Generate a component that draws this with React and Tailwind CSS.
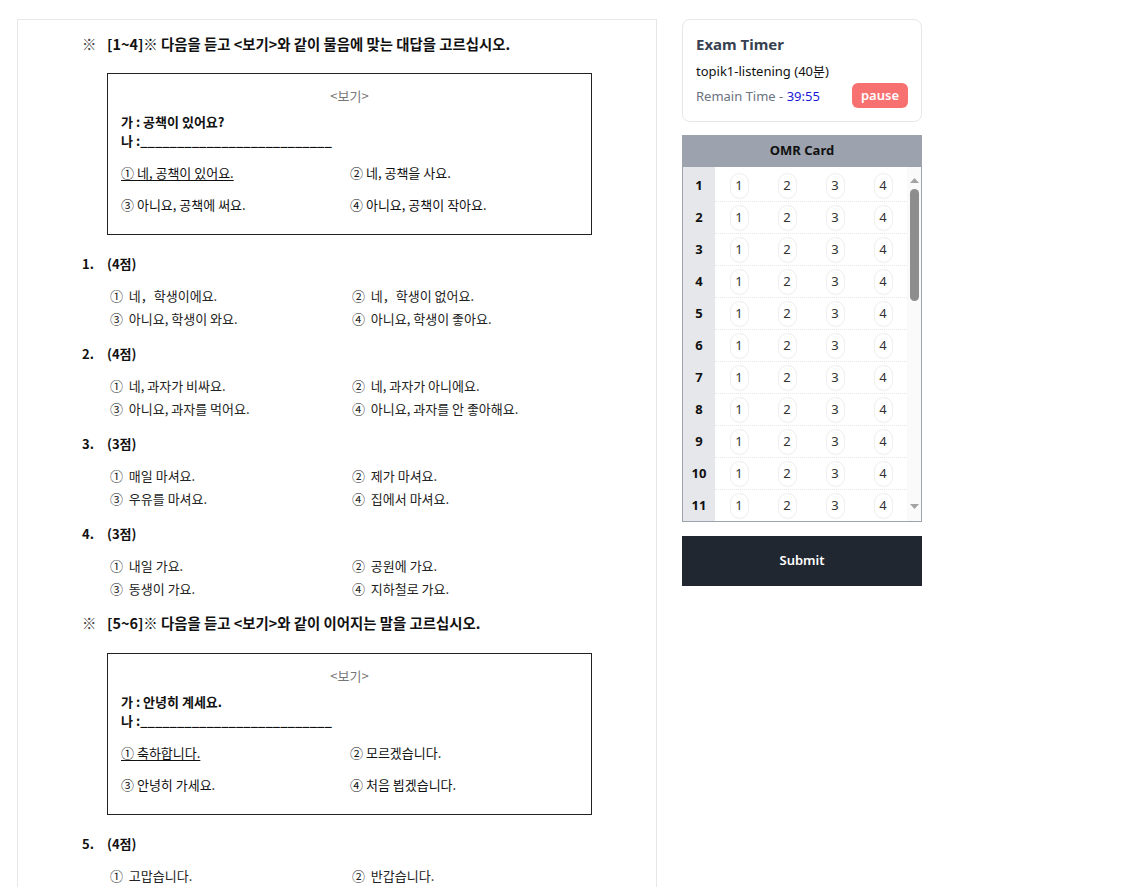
import React from 'react';

const SECTIONS = [
  {
    range: '[1~4]',
    title: '다음을 듣고 <보기>와 같이 물음에 맞는 대답을 고르십시오.',
    example: {
      ga: '공책이 있어요?',
      options: ['네, 공책이 있어요.', '네, 공책을 사요.', '아니요, 공책에 써요.', '아니요, 공책이 작아요.'],
    },
    questions: [
      { no: 1, score: 4, options: ['네，학생이에요.', '네，학생이 없어요.', '아니요, 학생이 와요.', '아니요, 학생이 좋아요.'] },
      { no: 2, score: 4, options: ['네, 과자가 비싸요.', '네, 과자가 아니에요.', '아니요, 과자를 먹어요.', '아니요, 과자를 안 좋아해요.'] },
      { no: 3, score: 3, options: ['매일 마셔요.', '제가 마셔요.', '우유를 마셔요.', '집에서 마셔요.'] },
      { no: 4, score: 3, options: ['내일 가요.', '공원에 가요.', '동생이 가요.', '지하철로 가요.'] },
    ],
  },
  {
    range: '[5~6]',
    title: '다음을 듣고 <보기>와 같이 이어지는 말을 고르십시오.',
    example: {
      ga: '안녕히 계세요.',
      options: ['축하합니다.', '모르겠습니다.', '안녕히 가세요.', '처음 뵙겠습니다.'],
    },
    questions: [
      { no: 5, score: 4, options: ['고맙습니다.', '반갑습니다.', '괜찮습니다.', '미안합니다.'] },
      { no: 6, score: 3, options: ['네, 알겠습니다.', '네, 맞습니다.', '아니요, 괜찮아요.', '아니요, 몰라요.'] },
    ],
  },
];

const MARKS = ['①', '②', '③', '④'];

function ExampleBox({ example, first }) {
  return (
    <div className={`${first ? 'mt-[19px]' : 'mt-[20px]'} ml-[25px] w-[485px] border border-[#222] pt-[12px] pb-[19px] px-[13px] text-[13px] text-[#111]`}>
      <div className="text-center leading-[20px] text-[#777]">&lt;보기&gt;</div>
      <div className="mt-[6px] font-bold leading-[19px]">가 : {example.ga}</div>
      <div className="font-bold leading-[19px]">나 :__________________________</div>
      <div className="mt-[13px] grid grid-cols-[229px_1fr] gap-y-[12px] leading-[20px]">
        {example.options.map((o, i) => (
          <div key={i} className={i === 0 ? 'underline underline-offset-2' : ''}>
            {MARKS[i]} {o}
          </div>
        ))}
      </div>
    </div>
  );
}

function Question({ q, first }) {
  return (
    <div className={first ? 'mt-[19px]' : 'mt-[14px]'}>
      <div className="flex font-bold text-[13px] leading-[20px] text-[#111]">
        <span className="w-[25px]">{q.no}.</span>
        <span>({q.score}점)</span>
      </div>
      <div className="mt-[10px] ml-[28px] grid grid-cols-[242px_1fr] text-[13px] leading-[23px] text-[#222]">
        {q.options.map((o, i) => (
          <div key={i}>
            {MARKS[i]}&nbsp;&nbsp;{o}
          </div>
        ))}
      </div>
    </div>
  );
}

function Section({ s, first }) {
  return (
    <div className={first ? '' : 'mt-[13px]'}>
      <div className="flex font-bold text-[14.4px] leading-[20px] text-[#111]">
        <span className="w-[25px] font-normal text-[#444]">※</span>
        <span>
          {s.range}※ {s.title}
        </span>
      </div>
      <ExampleBox example={s.example} first={first} />
      {s.questions.map((q, i) => (
        <Question key={q.no} q={q} first={i === 0} />
      ))}
    </div>
  );
}

function OmrRow({ n }) {
  return (
    <div className="flex h-[32px]">
      <div className="w-[32px] shrink-0 bg-[#e5e7eb] flex items-center justify-center font-bold text-[13px] text-[#111]">
        {n}
      </div>
      <div className="flex flex-1 border-b border-dotted border-[#e5e7eb]">
        {[1, 2, 3, 4].map((c) => (
          <div key={c} className="w-[48px] flex items-center justify-center">
            <span className="w-[19px] h-[26px] rounded-full border border-[#eeeeee] flex items-center justify-center text-[13px] text-[#333]">
              {c}
            </span>
          </div>
        ))}
      </div>
    </div>
  );
}

function ScrollTrack() {
  return (
    <div className="w-[14px] shrink-0 bg-[#fafafa] flex flex-col items-center">
      <svg width="9" height="5" viewBox="0 0 9 5" className="mt-[11px]">
        <path d="M0 5 L4.5 0 L9 5 Z" fill="#a3a3a3" />
      </svg>
      <div className="mt-[6px] w-[9px] h-[112px] rounded-full bg-[#8d8d8d]" />
      <div className="flex-1" />
      <svg width="9" height="5" viewBox="0 0 9 5" className="mb-[12px]">
        <path d="M0 0 L9 0 L4.5 5 Z" fill="#a3a3a3" />
      </svg>
    </div>
  );
}

export default function App() {
  const rows = Array.from({ length: 30 }, (_, i) => i + 1);

  return (
    <div className="h-[887px] overflow-hidden bg-white font-['Noto_Sans','Noto_Sans_CJK_KR',sans-serif]">
      <div className="flex items-start gap-[25px] pl-[17px] pt-[19px]">
        <div className="w-[640px] h-[900px] shrink-0 border border-[#e5e7eb] pl-[64px] pt-[14px] font-['Noto_Sans_CJK_KR','Noto_Sans',sans-serif]">
          {SECTIONS.map((s, i) => (
            <Section key={s.range} s={s} first={i === 0} />
          ))}
        </div>

        <div className="w-[240px] shrink-0">
          <div className="rounded-lg border border-[#e5e7eb] px-[13px] pt-[13px] pb-[13px]">
            <h2 className="text-[15px] leading-[22px] font-bold text-[#374151]">Exam Timer</h2>
            <div className="mt-[6px] text-[13px] leading-[20px] text-[#111]">topik1-listening (40분)</div>
            <div className="mt-[2px] flex items-center justify-between">
              <div className="text-[13px] leading-[20px] text-[#6b7280]">
                Remain Time - <span className="text-[#1a1ad6]">39:55</span>
              </div>
              <button className="h-[25px] px-[9px] rounded-md bg-[#f87171] text-white text-[13px] font-semibold">
                pause
              </button>
            </div>
          </div>

          <div className="mt-[13px]">
            <div className="h-[32px] bg-[#9ca3af] flex items-center justify-center text-[13px] font-bold text-[#111]">
              OMR Card
            </div>
            <div className="h-[355px] flex border border-t-0 border-[#9ca3af]">
              <div className="flex-1 overflow-hidden">
                <div className="h-[3px] w-[32px] bg-[#e5e7eb]" />
                {rows.map((n) => (
                  <OmrRow key={n} n={n} />
                ))}
              </div>
              <ScrollTrack />
            </div>
          </div>

          <button className="mt-[14px] w-full h-[50px] bg-[#212730] text-white text-[13px] font-semibold">
            Submit
          </button>
        </div>
      </div>
    </div>
  );
}
